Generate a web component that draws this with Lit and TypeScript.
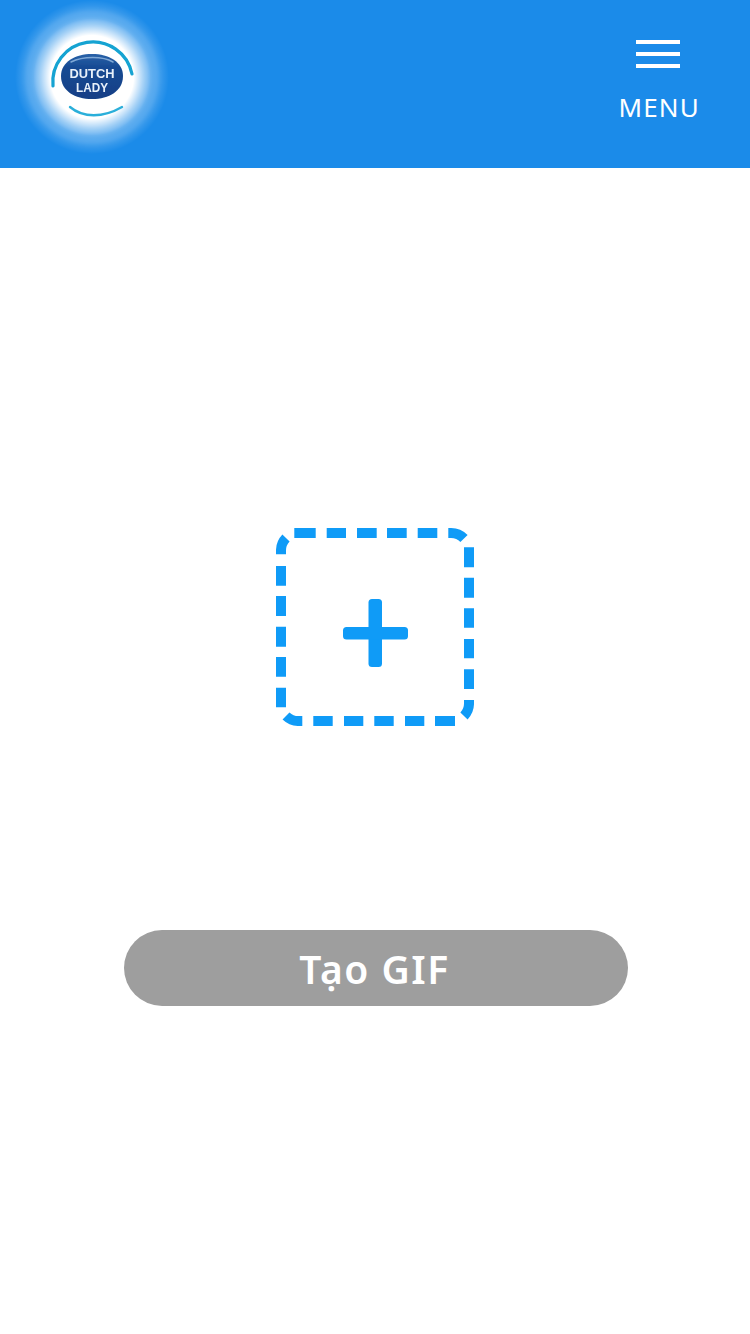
import {LitElement, html, css, svg} from 'lit';
import {customElement} from 'lit/decorators.js';

// logo del header, dibujado a mano (centro en 77,77)
const logo = svg`
  <defs>
    <radialGradient id="halo" cx="50%" cy="50%" r="50%">
      <stop offset="0" stop-color="#fff"/>
      <stop offset="0.54" stop-color="#fff"/>
      <stop offset="0.64" stop-color="#fff" stop-opacity="0.7"/>
      <stop offset="0.76" stop-color="#fff" stop-opacity="0.32"/>
      <stop offset="0.88" stop-color="#fff" stop-opacity="0.15"/>
      <stop offset="1" stop-color="#fff" stop-opacity="0"/>
    </radialGradient>
    <linearGradient id="oval" x1="0" y1="0" x2="0" y2="1">
      <stop offset="0" stop-color="#2a62a8"/>
      <stop offset="0.3" stop-color="#154a93"/>
      <stop offset="1" stop-color="#123f86"/>
    </linearGradient>
    <filter id="soft"><feGaussianBlur stdDeviation="0.7"/></filter>
    <filter id="softer"><feGaussianBlur stdDeviation="2"/></filter>
  </defs>
  <circle cx="77" cy="77" r="77" fill="url(#halo)"/>
  <g fill="none" stroke="#fff" stroke-opacity="0.1" filter="url(#softer)">
    <circle cx="77" cy="77" r="56" stroke-width="3"/>
    <circle cx="77" cy="77" r="65" stroke-width="3"/>
  </g>
  <g fill="none" filter="url(#soft)" stroke-linecap="round">
    <path d="M38 86A40 40 0 0 1 117 74" stroke="#12a3d2" stroke-width="3.200"/>
    <path d="M55 107C68 118 88 118 107 107" stroke="#2cafda" stroke-width="2.400"/>
    <path d="M46 76C46 62 60 54 77 54C94 54 108 62 108 76C108 91 94 99 77 99C60 99 46 91 46 76Z" fill="url(#oval)"/>
    <path d="M56 62C68 56 88 56 98 62" stroke="#7fa8d6" stroke-width="1.500"/>
  </g>
  <g font-family="'Liberation Sans', sans-serif" font-weight="700" fill="#e8f1fa" text-anchor="middle" filter="url(#soft)">
    <text x="77" y="77.500" font-size="12.400" textLength="45" lengthAdjust="spacingAndGlyphs">DUTCH</text>
    <text x="77" y="91.500" font-size="12.400" textLength="32" lengthAdjust="spacingAndGlyphs">LADY</text>
  </g>
`;

// trazos del borde punteado, medidos uno a uno porque no son regulares
const dashes = [
  'M18.3 5H39.700M50.700 5H70M81 5H100.700M111 5H130.700M141.700 5H161.300',
  'M172.300 5H175A18 18 0 0 1 188 10.500',
  'M193 19.300V39.300M193 49.700V69.700M193 80.300V99.700M193 111V130.300M193 141.300V161',
  'M193 172V175A18 18 0 0 1 188 188',
  'M37.300 193H56.700M68 193H87.300M98.300 193H117.700M129 193H148.300M159 193H179',
  'M26.300 193H23A18 18 0 0 1 10 188',
  'M5 159.700V179.300M5 129V148.700M5 98.700V118.700M5 68V88M5 38V57.700',
  'M5 26.300V23A18 18 0 0 1 10 10',
].join('');

@customElement('app-root')
export class AppRoot extends LitElement {
  static styles = css`
    :host {
      display: block;
      min-height: 1334px;
      background: #fff;
      font-family: 'Noto Sans', sans-serif;
    }

    .header {
      display: flex;
      justify-content: space-between;
      align-items: flex-start;
      height: 168px;
      padding: 0 50px 0 15px;
      background: #1b8be9;
    }

    .logo {
      display: block;
      width: 154px;
      height: 154px;
    }

    .menu {
      display: flex;
      flex-direction: column;
      align-items: center;
      padding-top: 40px;
      color: #fff;
    }

    .bars {
      display: flex;
      flex-direction: column;
      gap: 8px;
      width: 44px;
      margin-right: 2px;
    }

    .bars span {
      height: 4px;
      background: #fff;
    }

    .menu-label {
      margin-top: 22px;
      font-size: 26px;
      line-height: 34px;
      letter-spacing: 1.2px;
    }

    .main {
      display: flex;
      flex-direction: column;
      align-items: center;
      padding-top: 360px;
    }

    .picker {
      display: block;
      width: 198px;
      height: 198px;
    }

    .dash {
      fill: none;
      stroke: #0f9bf7;
      stroke-width: 10;
    }

    .plus {
      fill: #0f9bf7;
    }

    .create {
      display: flex;
      align-items: center;
      justify-content: center;
      box-sizing: border-box;
      width: 504px;
      height: 76px;
      margin-top: 204px;
      margin-left: 2px;
      padding-right: 3px;
      border-radius: 38px;
      background: #9e9e9e;
      color: #fff;
      font-size: 39px;
      font-weight: 600;
      letter-spacing: 1.5px;
    }
  `;

  render() {
    return html`
      <div class="header">
        <svg class="logo" viewBox="0 0 154 154">${logo}</svg>
        <div class="menu">
          <div class="bars"><span></span><span></span><span></span></div>
          <div class="menu-label">MENU</div>
        </div>
      </div>
      <div class="main">
        <svg class="picker" viewBox="0 0 198 198">
          <path class="dash" d=${dashes} />
          <rect class="plus" x="92.500" y="71" width="13.500" height="68" rx="3.500" />
          <rect class="plus" x="67" y="99" width="65" height="12.500" rx="3.500" />
        </svg>
        <div class="create">Tạo GIF</div>
      </div>
    `;
  }
}
